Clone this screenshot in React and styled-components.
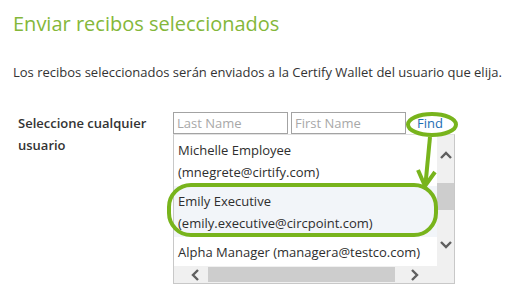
import React from 'react';
import styled, {createGlobalStyle} from 'styled-components';

const GlobalStyle = createGlobalStyle`
    html, body {
        margin: 0;
        padding: 0;
        background: #fff;
    }
    body {
        font-family: "Open Sans", "Noto Sans", "DejaVu Sans", sans-serif;
        color: #333;
    }
`;

const users = [
    {name: 'Michelle Employee', email: '(mnegrete@cirtify.com)', wrap: true},
    {name: 'Emily Executive', email: '(emily.executive@circpoint.com)', wrap: true, selected: true},
    {name: 'Alpha Manager', email: '(managera@testco.com)', wrap: false},
];

const Chevron = ({dir}) => {
    const points = {
        up: '1,8 6,3 11,8',
        down: '1,3 6,8 11,3',
        left: '8,1 3,6 8,11',
        right: '3,1 8,6 3,11',
    }[dir];
    return (
        <svg width="12" height="12" viewBox="0 0 12 12">
            <polyline points={points} fill="none" stroke="#5f5f5f" strokeWidth="2.4"
                      strokeLinecap="butt" strokeLinejoin="miter"/>
        </svg>
    );
};

const Annotations = () => (
    <Overlay width="515" height="295" viewBox="0 0 515 295">
        <g fill="none" stroke="#78b41c" strokeWidth="4">
            <ellipse cx="432" cy="124.5" rx="24" ry="10.5"/>
            <line x1="430" y1="137" x2="425.5" y2="184"/>
            <polyline points="418,170 425,186 435,172" strokeLinejoin="miter"/>
            <rect x="169" y="185" width="267" height="50" rx="22" ry="22"/>
        </g>
    </Overlay>
);

function App() {
    return (
        <Page>
            <GlobalStyle/>
            <Title>Enviar recibos seleccionados</Title>
            <Intro>Los recibos seleccionados serán enviados a la Certify Wallet del usuario que elija.</Intro>
            <FormRow>
                <Label>Seleccione cualquier usuario</Label>
                <Picker>
                    <SearchRow>
                        <SearchInput placeholder="Last Name"/>
                        <SearchInput placeholder="First Name"/>
                        <FindLink href="#">Find</FindLink>
                    </SearchRow>
                    <ListBox>
                        <Rows>
                            {users.map(u => (
                                <UserRow key={u.name} $selected={u.selected}>
                                    {u.wrap ? (
                                        <>
                                            <div>{u.name}</div>
                                            <div>{u.email}</div>
                                        </>
                                    ) : (
                                        <div>{u.name} {u.email}</div>
                                    )}
                                </UserRow>
                            ))}
                        </Rows>
                        <VScroll>
                            <ArrowV $top={12}><Chevron dir="up"/></ArrowV>
                            <VThumb/>
                            <ArrowV $top={26}><Chevron dir="down"/></ArrowV>
                        </VScroll>
                        <HScroll>
                            <ArrowH $left={16}><Chevron dir="left"/></ArrowH>
                            <HThumb/>
                            <ArrowH $left={14}><Chevron dir="right"/></ArrowH>
                        </HScroll>
                        <Corner/>
                    </ListBox>
                </Picker>
            </FormRow>
            <Annotations/>
        </Page>
    );
}

const Page = styled.div`
    position: relative;
    width: 515px;
    height: 295px;
    overflow: hidden;
    padding: 10px 13px 0;
    box-sizing: border-box;
`;

const Title = styled.h1`
    margin: 0;
    font-size: 20px;
    line-height: 28px;
    font-weight: 400;
    color: #84b73a;
`;

const Intro = styled.p`
    margin: 25px 0 0;
    font-size: 13px;
    line-height: 18px;
    white-space: nowrap;
`;

const FormRow = styled.div`
    display: flex;
    margin-top: 31px;
`;

const Label = styled.div`
    width: 160px;
    padding-left: 5px;
    box-sizing: border-box;
    font-size: 13px;
    line-height: 22px;
    font-weight: 600;
    color: #333;
`;

const Picker = styled.div`
    display: flex;
    flex-direction: column;
    width: 282px;
`;

const SearchRow = styled.div`
    display: flex;
    align-items: center;
    gap: 3px;
`;

const SearchInput = styled.input`
    width: 115px;
    height: 22px;
    box-sizing: border-box;
    border: 1px solid #a3a3a3;
    padding: 0 3px;
    font-family: "Open Sans", sans-serif;
    font-size: 13px;
    color: #333;
    outline: none;
    &::placeholder {
        color: #a8a8a8;
    }
`;

const FindLink = styled.a`
    margin-left: 8px;
    font-size: 13px;
    line-height: 22px;
    color: #1c6db3;
    text-decoration: none;
`;

const ListBox = styled.div`
    display: grid;
    grid-template-columns: 263px 17px;
    grid-template-rows: 131px 17px;
    width: 282px;
    height: 150px;
    box-sizing: border-box;
    border: 1px solid #c8c8c8;
    border-top-color: #e2e2e2;
`;

const Rows = styled.div`
    overflow: hidden;
`;

const UserRow = styled.div`
    padding: 4px 4px 3px;
    font-size: 13px;
    line-height: 22px;
    white-space: nowrap;
    color: #2e2e2e;
    background: ${p => (p.$selected ? '#f2f5f9' : '#fff')};
`;

const VScroll = styled.div`
    display: flex;
    flex-direction: column;
    align-items: center;
    background: #f0f0f0;
`;

const ArrowV = styled.div`
    display: flex;
    justify-content: center;
    width: 17px;
    height: 17px;
    align-items: center;
    margin-top: ${p => p.$top}px;
`;

const VThumb = styled.div`
    width: 17px;
    height: 27px;
    margin-top: 19px;
    background: #cdcdcd;
`;

const HScroll = styled.div`
    display: flex;
    align-items: center;
    background: #f0f0f0;
`;

const ArrowH = styled.div`
    display: flex;
    justify-content: center;
    align-items: center;
    width: 12px;
    height: 17px;
    margin-left: ${p => p.$left}px;
`;

const HThumb = styled.div`
    width: 187px;
    height: 15px;
    margin-left: 6px;
    background: #cdcdcd;
`;

const Corner = styled.div`
    background: #f0f0f0;
`;

const Overlay = styled.svg`
    position: absolute;
    left: 0;
    top: 0;
    pointer-events: none;
`;

export default App;
